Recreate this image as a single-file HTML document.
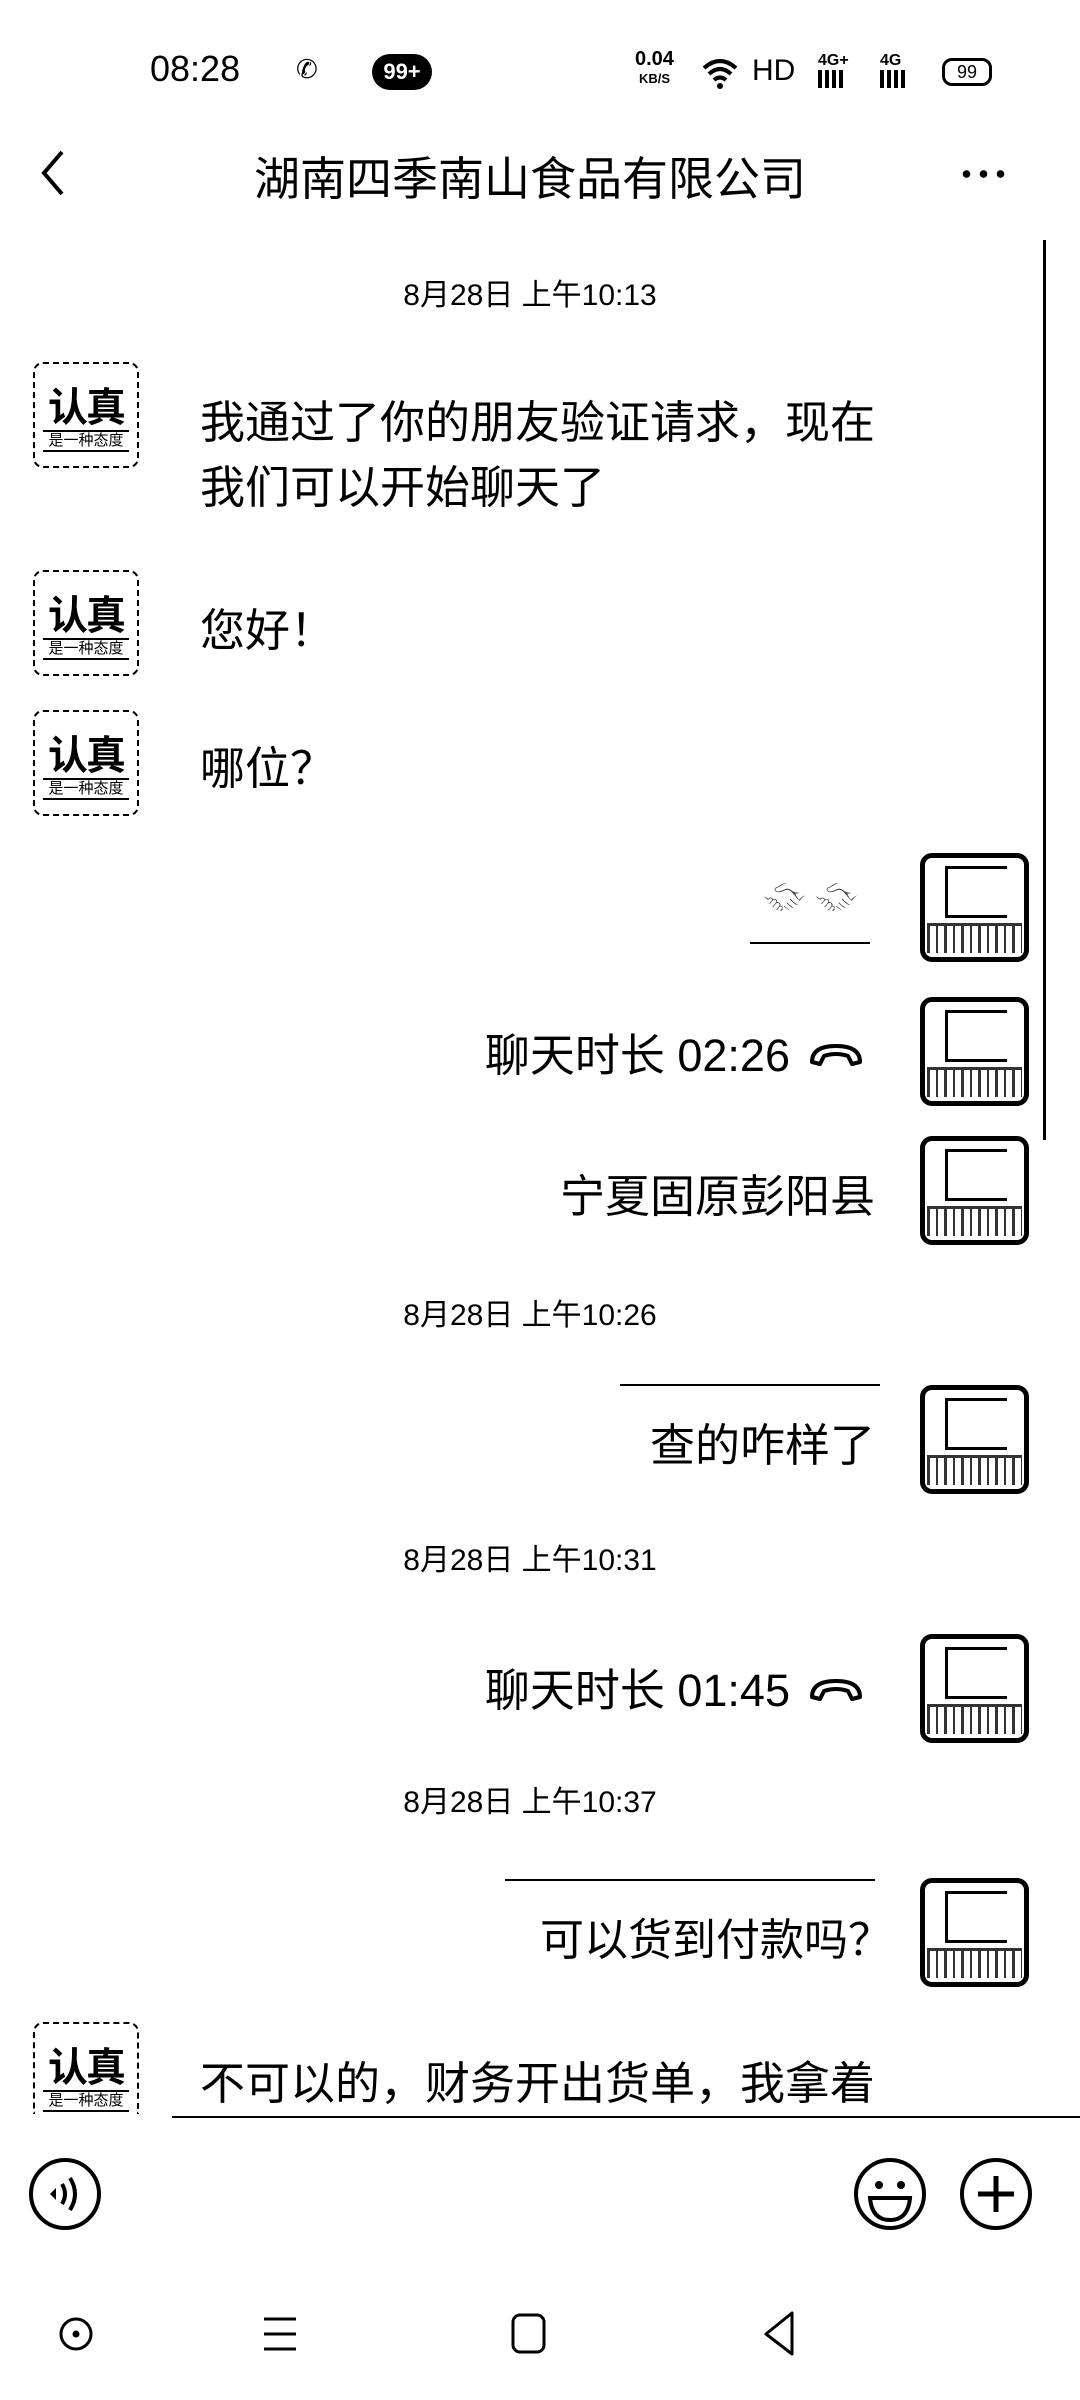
<!DOCTYPE html>
<html><head><meta charset="utf-8">
<style>
*{margin:0;padding:0;box-sizing:border-box}
html,body{width:1080px;height:2400px;overflow:hidden}
body{background:#fff;position:relative;font-family:"Liberation Sans","Noto Sans CJK SC",sans-serif;color:#000}
.a{position:absolute}
.ts{position:absolute;left:0;width:1060px;text-align:center;font-size:30px}
.msg{position:absolute;font-size:45px;line-height:65px;white-space:nowrap}
.la{position:absolute;left:33px;width:106px;height:106px;border:2px dashed #000;border-radius:10px;text-align:center}
.la .b{font-size:40px;line-height:44px;margin-top:22px;font-weight:bold;letter-spacing:-2px}
.la .s{font-size:15px;line-height:18px;border-top:2px solid #000;border-bottom:2px solid #000;margin:0 8px}
.ra{position:absolute;left:920px;width:109px;height:109px;border:5px solid #000;border-radius:12px;overflow:hidden;background:#fff}
.ra .w{position:absolute;left:20px;top:8px;width:62px;height:52px;border:3px solid #000;border-right:none}
.ra .bt{position:absolute;left:2px;right:2px;bottom:4px;height:30px;border-top:3px solid #000;background:repeating-linear-gradient(90deg,#000 0 3px,#fff 3px 9px,#000 9px 11px,#fff 11px 17px);opacity:.8}
</style></head><body>
<!-- status bar -->
<div class="a" style="left:150px;top:48px;font-size:36px">08:28</div>
<div class="a" style="left:296px;top:54px;font-size:26px">✆</div>
<div class="a" style="left:372px;top:54px;width:60px;height:36px;background:#000;border-radius:18px;color:#fff;font-size:22px;font-weight:bold;text-align:center;line-height:36px">99+</div>
<div class="a" style="left:635px;top:50px;font-size:20px;font-weight:bold;line-height:18px;text-align:center">0.04<br><span style="font-size:13px">KB/S</span></div>
<svg class="a" style="left:700px;top:56px" width="40" height="34"><path d="M4 12 Q20 -2 36 12 M9 18 Q20 8 31 18 M14 24 Q20 19 26 24" stroke="#000" stroke-width="4" fill="none"/><circle cx="20" cy="30" r="3"/></svg>
<div class="a" style="left:752px;top:54px;font-size:30px">HD</div>
<div class="a" style="left:818px;top:52px;font-size:16px;font-weight:bold">4G+</div>
<div class="a" style="left:818px;top:70px;width:28px;height:18px;background:repeating-linear-gradient(90deg,#000 0 4px,#fff 4px 7px)"></div>
<div class="a" style="left:880px;top:52px;font-size:16px;font-weight:bold">4G</div>
<div class="a" style="left:880px;top:70px;width:28px;height:18px;background:repeating-linear-gradient(90deg,#000 0 4px,#fff 4px 7px)"></div>
<div class="a" style="left:942px;top:58px;width:50px;height:28px;border:3px solid #000;border-radius:10px;font-size:18px;text-align:center;line-height:22px">99</div>
<!-- header -->
<svg class="a" style="left:36px;top:148px" width="32" height="50"><path d="M26 4 L8 25 L26 46" stroke="#000" stroke-width="4" fill="none"/></svg>
<div class="a" style="left:0;width:1060px;top:143px;text-align:center;font-size:46px">湖南四季南山食品有限公司</div>
<div class="a" style="left:958px;top:170px;width:50px;height:8px;background:radial-gradient(circle,#000 3.5px,transparent 4px) 0 0/17px 8px"></div>
<div class="a" style="left:1043px;top:240px;width:3px;height:900px;background:#000"></div>
<!-- messages -->
<div class="ts" style="top:270px">8月28日 上午10:13</div>
<div class="la" style="top:362px"><div class="b">认真</div><div class="s">是一种态度</div></div>
<div class="msg" style="left:200px;top:390px">我通过了你的朋友验证请求，现在<br>我们可以开始聊天了</div>
<div class="la" style="top:570px"><div class="b">认真</div><div class="s">是一种态度</div></div>
<div class="msg" style="left:200px;top:598px">您好！</div>
<div class="la" style="top:710px"><div class="b">认真</div><div class="s">是一种态度</div></div>
<div class="msg" style="left:200px;top:736px">哪位？</div>

<div class="ra" style="top:853px"><div class="w"></div><div class="bt"></div></div>
<div class="a" style="left:758px;top:872px;font-size:42px;filter:grayscale(1) contrast(3)">🤝🤝</div>
<div class="a" style="left:750px;top:942px;width:120px;height:2px;background:#000"></div>

<div class="ra" style="top:997px"><div class="w"></div><div class="bt"></div></div>
<div class="msg" style="right:290px;top:1023px">聊天时长 02:26</div>
<svg class="a" style="left:808px;top:1040px" width="56" height="30"><path d="M4 22 Q4 6 28 6 Q52 6 52 22 L44 24 L40 16 Q28 12 16 16 L12 24 Z" stroke="#000" stroke-width="4" fill="none" stroke-linejoin="round"/></svg>

<div class="ra" style="top:1136px"><div class="w"></div><div class="bt"></div></div>
<div class="msg" style="right:205px;top:1164px">宁夏固原彭阳县</div>

<div class="ts" style="top:1290px">8月28日 上午10:26</div>
<div class="ra" style="top:1385px"><div class="w"></div><div class="bt"></div></div>
<div class="a" style="left:620px;top:1384px;width:260px;height:2px;background:#000"></div>
<div class="msg" style="right:205px;top:1413px">查的咋样了</div>

<div class="ts" style="top:1535px">8月28日 上午10:31</div>
<div class="ra" style="top:1634px"><div class="w"></div><div class="bt"></div></div>
<div class="msg" style="right:290px;top:1658px">聊天时长 01:45</div>
<svg class="a" style="left:808px;top:1675px" width="56" height="30"><path d="M4 22 Q4 6 28 6 Q52 6 52 22 L44 24 L40 16 Q28 12 16 16 L12 24 Z" stroke="#000" stroke-width="4" fill="none" stroke-linejoin="round"/></svg>

<div class="ts" style="top:1777px">8月28日 上午10:37</div>
<div class="ra" style="top:1878px"><div class="w"></div><div class="bt"></div></div>
<div class="a" style="left:505px;top:1879px;width:370px;height:2px;background:#000"></div>
<div class="msg" style="right:188px;top:1908px;font-size:44px">可以货到付款吗？</div>

<div class="la" style="top:2022px;height:92px;border-bottom:none;border-radius:10px 10px 0 0;overflow:hidden"><div class="b">认真</div><div class="s">是一种态度</div></div>
<div class="msg" style="left:200px;top:2051px">不可以的，财务开出货单，我拿着</div>
<div class="a" style="left:172px;top:2116px;width:908px;height:2px;background:#000"></div>
<!-- input bar -->
<svg class="a" style="left:28px;top:2156px" width="74" height="76"><circle cx="37" cy="38" r="34" stroke="#000" stroke-width="4" fill="none"/><path d="M22 38 l6 -6 v12z" fill="#000"/><path d="M34 28 q6 10 0 20 M42 22 q10 16 0 32" stroke="#000" stroke-width="4" fill="none"/></svg>
<svg class="a" style="left:852px;top:2156px" width="76" height="76"><circle cx="38" cy="38" r="34" stroke="#000" stroke-width="4" fill="none"/><circle cx="27" cy="29" r="4"/><circle cx="49" cy="29" r="4"/><path d="M18 42 H58 Q56 64 38 64 Q20 64 18 42Z" stroke="#000" stroke-width="4" fill="none"/></svg>
<svg class="a" style="left:958px;top:2156px" width="76" height="76"><circle cx="38" cy="38" r="34" stroke="#000" stroke-width="4" fill="none"/><path d="M38 20 V56 M20 38 H56" stroke="#000" stroke-width="5"/></svg>
<!-- nav -->
<svg class="a" style="left:58px;top:2314px" width="36" height="40"><circle cx="18" cy="20" r="15" stroke="#000" stroke-width="3" fill="none"/><circle cx="18" cy="20" r="3.5"/></svg>
<svg class="a" style="left:260px;top:2314px" width="40" height="40"><path d="M4 5 H36 M4 20 H36 M4 35 H36" stroke="#000" stroke-width="3"/></svg>
<svg class="a" style="left:510px;top:2312px" width="38" height="44"><rect x="3" y="3" width="31" height="37" rx="7" stroke="#000" stroke-width="3" fill="none"/></svg>
<svg class="a" style="left:760px;top:2310px" width="40" height="48"><path d="M32 3 V44 L6 24 Z" stroke="#000" stroke-width="3" fill="none" stroke-linejoin="round"/></svg>
</body></html>
